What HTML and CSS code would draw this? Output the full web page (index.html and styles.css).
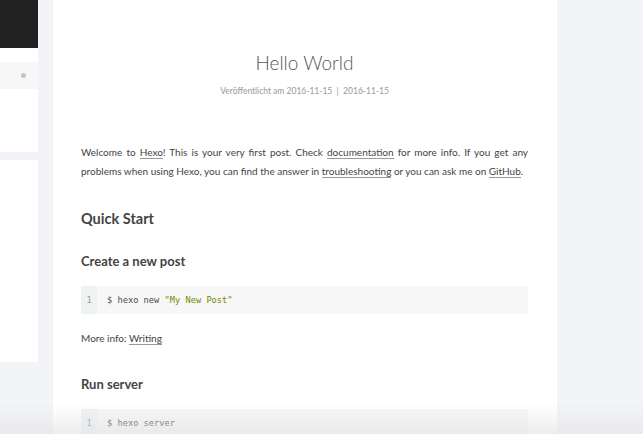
FILE: index.html
```html
<!DOCTYPE html>
<html lang="de">
<head>
<meta charset="utf-8">
<title>Hello World</title>
<link rel="stylesheet" href="styles.css">
</head>
<body>
<div class="page">
  <aside class="sidebar">
    <div class="brand-card">
      <div class="brand"></div>
      <div class="menu">
        <div class="menu-row"><span class="dot"></span></div>
      </div>
    </div>
    <div class="side-card"></div>
  </aside>
  <main class="post">
    <header class="post-header">
      <h1 class="post-title">Hello World</h1>
      <div class="post-meta">Veröffentlicht am 2016-11-15 &nbsp;|&nbsp; 2016-11-15</div>
    </header>
    <div class="post-body">
      <p class="intro">Welcome to <a href="#">Hexo</a>! This is your very first post. Check <a href="#">documentation</a> for more info. If you get any problems when using Hexo, you can find the answer in <a href="#">troubleshooting</a> or you can ask me on <a href="#">GitHub</a>.</p>
      <h2 class="h2">Quick Start</h2>
      <h3 class="h3">Create a new post</h3>
      <div class="code"><span class="gutter">1</span><span class="line">$ hexo new <span class="str">"My New Post"</span></span></div>
      <p class="info">More info: <a href="#">Writing</a></p>
      <h3 class="h3 run">Run server</h3>
      <div class="code"><span class="gutter">1</span><span class="line">$ hexo server</span></div>
    </div>
  </main>
</div>
<div class="fade"></div>
</body>
</html>
```
FILE: styles.css
```css
html, body {
  margin: 0;
  padding: 0;
  height: 100%;
  overflow: hidden;
}
body {
  background: #f3f4f8;
  font-family: Lato, "Open Sans", sans-serif;
  color: #444;
}
.page {
  display: flex;
  gap: 15px;
  align-items: flex-start;
}
.sidebar {
  width: 38px;
  display: flex;
  flex-direction: column;
  gap: 8px;
}
.brand-card {
  background: #fff;
  height: 152px;
}
.brand {
  height: 48px;
  background: #222;
}
.menu {
  padding-top: 14px;
}
.menu-row {
  height: 27px;
  background: #f7f7f7;
  display: flex;
  align-items: center;
  justify-content: flex-end;
  padding-right: 12px;
}
.dot {
  width: 5px;
  height: 5px;
  border-radius: 50%;
  background: #c4c4c4;
}
.side-card {
  background: #fff;
  height: 202px;
}
.post {
  width: 504px;
  min-height: 460px;
  background: #fff;
  box-sizing: border-box;
  padding: 50px 29px 0 28px;
}
.post-header {
  text-align: center;
}
.post-title {
  margin: 0;
  font-size: 19px;
  font-weight: 300;
  line-height: 26px;
  color: #555;
}
.post-meta {
  margin-top: 9px;
  font-size: 8.5px;
  color: #999;
  line-height: 12px;
}
.post-body {
  margin-top: 46px;
  font-size: 10px;
  line-height: 19px;
}
.intro {
  margin: 0;
  text-align: justify;
}
a {
  color: #444;
  text-decoration: none;
  border-bottom: 1px solid #999;
}
.h2 {
  margin: 28px 0 0;
  font-size: 14.5px;
  font-weight: 700;
  line-height: 20px;
  color: #444;
}
.h3 {
  margin: 23px 0 0;
  font-size: 13px;
  font-weight: 700;
  line-height: 18px;
  color: #444;
}
.run {
  margin-top: 27px;
}
.code {
  margin-top: 16px;
  height: 28px;
  background: #f7f7f7;
  display: flex;
  align-items: stretch;
  font-family: "DejaVu Sans Mono", "Liberation Mono", monospace;
  font-size: 8.7px;
  color: #4d4d4c;
}
.gutter {
  width: 16px;
  background: #eff2f3;
  color: #999;
  display: flex;
  align-items: center;
  justify-content: center;
}
.line {
  padding-left: 10px;
  display: flex;
  align-items: center;
  white-space: pre;
}
.str {
  color: #718c00;
}
.info {
  margin: 15px 0 0;
}
.fade {
  position: fixed;
  left: 0;
  right: 0;
  bottom: 0;
  height: 30px;
  background: linear-gradient(to bottom, rgba(230,230,232,0), rgba(225,225,228,0.6));
  pointer-events: none;
}
```
